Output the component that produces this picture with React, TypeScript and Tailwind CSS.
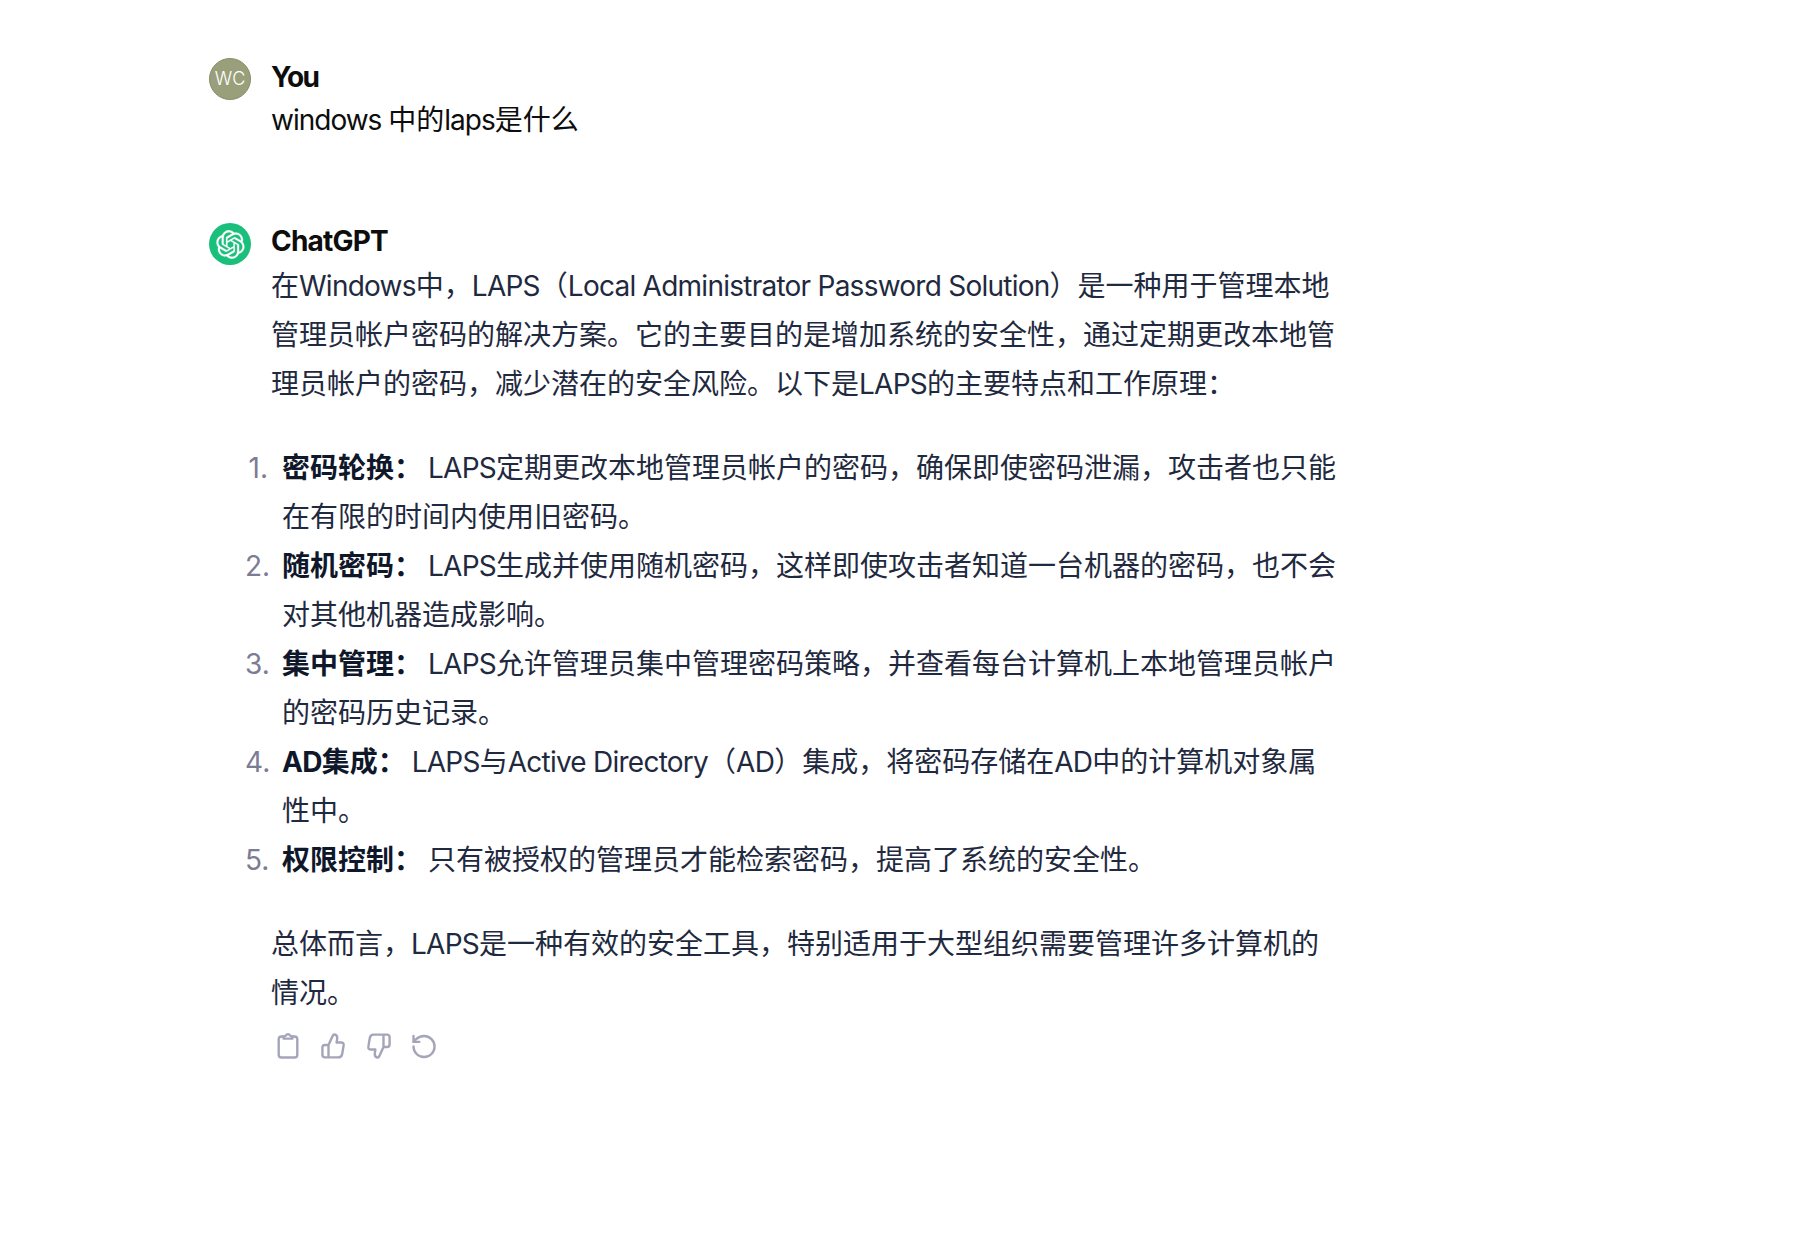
const LOGO = "M37.5324 16.8707C37.9808 15.5241 38.1363 14.0974 37.9886 12.6859C37.8409 11.2744 37.3934 9.91076 36.676 8.68622C35.6126 6.83404 33.9882 5.3676 32.0373 4.4985C30.0864 3.62941 27.9098 3.40259 25.8215 3.85078C24.8796 2.7893 23.7219 1.94125 22.4257 1.36341C21.1295 0.785575 19.7249 0.491269 18.3058 0.500197C16.1708 0.495044 14.0893 1.16803 12.3614 2.42214C10.6335 3.67624 9.34853 5.44666 8.6917 7.47815C7.30085 7.76286 5.98686 8.3414 4.8377 9.17505C3.68854 10.0087 2.73073 11.0782 2.02839 12.312C0.956464 14.1591 0.498905 16.2988 0.721698 18.4228C0.944492 20.5467 1.83612 22.5449 3.268 24.1293C2.81966 25.4759 2.66413 26.9026 2.81182 28.3141C2.95951 29.7256 3.40701 31.0892 4.12437 32.3138C5.18791 34.1659 6.8123 35.6322 8.76321 36.5013C10.7141 37.3704 12.8907 37.5973 14.9789 37.1492C15.9208 38.2107 17.0786 39.0587 18.3747 39.6366C19.6709 40.2144 21.0755 40.5087 22.4946 40.4998C24.6307 40.5054 26.7133 39.8321 28.4418 38.5772C30.1704 37.3223 31.4556 35.5506 32.1119 33.5179C33.5027 33.2332 34.8167 32.6547 35.9659 31.821C37.115 30.9874 38.0728 29.9178 38.7752 28.684C39.8458 26.8371 40.3023 24.6979 40.0789 22.5748C39.8556 20.4517 38.9639 18.4544 37.5324 16.8707ZM22.4978 37.8849C20.7443 37.8874 19.0459 37.2733 17.6994 36.1501C17.7601 36.117 17.8666 36.0586 17.936 36.0161L25.9004 31.4156C26.1003 31.3019 26.2663 31.137 26.3813 30.9378C26.4964 30.7386 26.5563 30.5124 26.5549 30.2825V19.0542L29.9213 20.998C29.9389 21.0068 29.9541 21.0198 29.9656 21.0359C29.977 21.052 29.9842 21.0707 29.9867 21.0902V30.3889C29.9842 32.375 29.1946 34.2791 27.7909 35.6841C26.3872 37.0892 24.4838 37.8806 22.4978 37.8849ZM6.39227 31.0064C5.51397 29.4888 5.19742 27.7107 5.49804 25.9832C5.55718 26.0187 5.66048 26.0818 5.73461 26.1244L13.699 30.7248C13.8975 30.8408 14.1233 30.902 14.3532 30.902C14.583 30.902 14.8088 30.8408 15.0073 30.7248L24.731 25.1103V28.9979C24.7321 29.0177 24.7283 29.0376 24.7199 29.0556C24.7115 29.0736 24.6988 29.0893 24.6829 29.1012L16.6317 33.7497C14.9096 34.7416 12.8643 35.0097 10.9447 34.4954C9.02506 33.9811 7.38785 32.7263 6.39227 31.0064ZM4.29707 13.6194C5.17156 12.0998 6.55279 10.9364 8.19885 10.3327C8.19885 10.4013 8.19491 10.5228 8.19491 10.6071V19.808C8.19351 20.0378 8.25334 20.2638 8.36823 20.4629C8.48312 20.6619 8.64893 20.8267 8.84863 20.9404L18.5723 26.5542L15.206 28.4979C15.1894 28.5089 15.1703 28.5155 15.1505 28.5173C15.1307 28.5191 15.1107 28.516 15.0924 28.5082L7.04046 23.8557C5.32135 22.8601 4.06716 21.2235 3.55289 19.3046C3.03862 17.3858 3.30624 15.3413 4.29707 13.6194ZM31.955 20.0556L22.2312 14.4411L25.5976 12.4981C25.6142 12.4872 25.6333 12.4805 25.6531 12.4787C25.6729 12.4769 25.6928 12.4801 25.7111 12.4879L33.7631 17.1364C34.9967 17.849 36.0017 18.8982 36.6606 20.1613C37.3194 21.4244 37.6047 22.849 37.4832 24.2684C37.3617 25.6878 36.8382 27.0432 35.9743 28.1759C35.1103 29.3086 33.9415 30.1717 32.6047 30.6641C32.6047 30.5947 32.6047 30.4733 32.6047 30.3889V21.188C32.6066 20.9586 32.5474 20.7328 32.4332 20.5338C32.319 20.3348 32.154 20.1698 31.955 20.0556ZM35.3055 15.0128C35.2464 14.9765 35.1431 14.9142 35.069 14.8717L27.1045 10.2712C26.906 10.1554 26.6803 10.0943 26.4504 10.0943C26.2206 10.0943 25.9948 10.1554 25.7963 10.2712L16.0726 15.8858V11.9982C16.0715 11.9783 16.0753 11.9585 16.0837 11.9405C16.0921 11.9225 16.1048 11.9068 16.1207 11.8949L24.1719 7.25025C25.4053 6.53903 26.8158 6.19376 28.2383 6.25482C29.6608 6.31589 31.0364 6.78077 32.2044 7.59508C33.3723 8.40939 34.2842 9.53945 34.8334 10.8531C35.3826 12.1667 35.5464 13.6095 35.3055 15.0128ZM14.2424 21.9419L10.8752 19.9981C10.8576 19.9893 10.8423 19.9763 10.8309 19.9602C10.8195 19.9441 10.8122 19.9254 10.8098 19.9058V10.6071C10.8107 9.18295 11.2173 7.78848 11.9819 6.58696C12.7466 5.38544 13.8377 4.42659 15.1275 3.82264C16.4173 3.21869 17.8524 2.99464 19.2649 3.1767C20.6775 3.35876 22.0089 3.93941 23.1034 4.85067C23.0427 4.88379 22.937 4.94215 22.8668 4.98473L14.9024 9.58517C14.7025 9.69878 14.5366 9.86356 14.4215 10.0626C14.3065 10.2616 14.2466 10.4877 14.2479 10.7175L14.2424 21.9419ZM16.071 17.9991L20.4018 15.4978L24.7325 17.9975V22.9985L20.4018 25.4983L16.071 22.9985V17.9991Z";

const items: [string, string[]][] = [
  ["密码轮换：", ["LAPS定期更改本地管理员帐户的密码，确保即使密码泄漏，攻击者也只能", "在有限的时间内使用旧密码。"]],
  ["随机密码：", ["LAPS生成并使用随机密码，这样即使攻击者知道一台机器的密码，也不会", "对其他机器造成影响。"]],
  ["集中管理：", ["LAPS允许管理员集中管理密码策略，并查看每台计算机上本地管理员帐户", "的密码历史记录。"]],
  ["AD集成：", ["LAPS与Active Directory（AD）集成，将密码存储在AD中的计算机对象属", "性中。"]],
  ["权限控制：", ["只有被授权的管理员才能检索密码，提高了系统的安全性。"]],
];

// Latin runs are tightened so Inter takes up the width of the reference's narrower face.
function T({ children, tight }: { children: string; tight?: boolean }) {
  const parts = children.split(/([A-Za-z][A-Za-z ]*)/);
  return (
    <>
      {parts.map((p, i) =>
        i % 2 === 1 ? (
          <span key={i} className={tight ? "tracking-[-1px]" : "tracking-[-0.75px]"}>{p}</span>
        ) : (
          <span key={i}>{p}</span>
        )
      )}
    </>
  );
}

function Icon({ children }: { children: React.ReactNode }) {
  return (
    <svg width="28" height="28" viewBox="0 0 28 28" fill="none" stroke="currentColor" strokeWidth="2.4" strokeLinecap="round" strokeLinejoin="round">
      {children}
    </svg>
  );
}

const THUMB = "M9.5 13 L13.6 4 Q14.5 1.9 16.2 2.6 Q18.6 3.6 18.2 6.6 L17.6 10.5 H22 Q25.2 10.5 24.6 13.6 L23.2 22 Q22.6 25.4 19.2 25.4 H6 Q3.4 25.4 3.4 22.8 V15.6 Q3.4 13 6 13 Z M9.5 13 V25.4";

export default function App() {
  return (
    <div className="min-h-[1256px] bg-white pt-[58px] pl-[209px] text-[28px] leading-[49px] [font-family:Inter,'Noto_Sans_CJK_SC',sans-serif]">
      <div className="flex gap-[20px]">
        <div className="flex h-[42px] w-[42px] shrink-0 items-center justify-center rounded-full border border-[#8a8f6c] bg-[#9a9f7b] text-[18px] font-light leading-none text-white">WC</div>
        <div className="flex flex-col">
          <div className="h-[38px] font-bold leading-[38px] tracking-[-1.5px] text-[#0d0d0d]">You</div>
          <div className="pt-[1px] leading-[46px] text-[#0d0d0d]"><T tight>windows 中的laps是什么</T></div>
        </div>
      </div>

      <div className="mt-[80px] flex gap-[20px]">
        <div className="flex h-[42px] w-[42px] shrink-0 items-center justify-center rounded-full bg-[#1bbf7c]">
          <svg width="29" height="29" viewBox="0 0 41 41" fill="white" stroke="white" strokeWidth="0.4"><path d={LOGO} /></svg>
        </div>
        <div className="flex w-[1080px] flex-col">
          <div className="h-[39px] font-bold leading-[36px] tracking-[-0.8px] text-[#0d0d0d]">ChatGPT</div>
          <div className="text-[#1f2a40]">
            <p>
              <T>在Windows中，LAPS（Local Administrator Password Solution）是一种用于管理本地</T><br />
              <T>管理员帐户密码的解决方案。它的主要目的是增加系统的安全性，通过定期更改本地管</T><br />
              <T>理员帐户的密码，减少潜在的安全风险。以下是LAPS的主要特点和工作原理：</T>
            </p>
            <ol className="my-[35px] ml-[-26px]">
              {items.map(([head, lines], n) => (
                <li key={head} className="flex">
                  <span className="mr-[14px] w-[23px] shrink-0 text-right text-[#7c7c94]">{n + 1}.</span>
                  <div>
                    <strong className="mr-[6px] font-bold text-[#0f172a]"><T>{head}</T></strong>
                    {lines.map((l, i) => (
                      <span key={i}>{i > 0 && <br />}<T>{l}</T></span>
                    ))}
                  </div>
                </li>
              ))}
            </ol>
            <p>
              <T>总体而言，LAPS是一种有效的安全工具，特别适用于大型组织需要管理许多计算机的</T><br />
              <T>情况。</T>
            </p>
          </div>
          <div className="mt-[14px] flex items-center gap-[17.3px] pl-[3px] text-[#a5a5ba]">
            <Icon>
              <path d="M9.5 4.5H7.5Q4.7 4.5 4.7 7.3V22.7Q4.7 25.5 7.5 25.5H20.5Q23.3 25.5 23.3 22.7V7.3Q23.3 4.5 20.5 4.5H18.5" />
              <path d="M9.5 6.6V4.6Q11.5 4.4 12 3.3Q12.6 2.2 14 2.2Q15.4 2.2 16 3.3Q16.5 4.4 18.5 4.6V6.6Z" />
            </Icon>
            <Icon><path d={THUMB} /></Icon>
            <Icon><g transform="rotate(180 14 14)"><path d={THUMB} /></g></Icon>
            <Icon>
              <g transform="translate(0 0.5) scale(1.17)">
                <path d="M3 12a9 9 0 1 0 9-9 9.75 9.75 0 0 0-6.74 2.74L3 8" strokeWidth="2.05" />
                <path d="M3 3v5h5" strokeWidth="2.05" />
              </g>
            </Icon>
          </div>
        </div>
      </div>
    </div>
  );
}
